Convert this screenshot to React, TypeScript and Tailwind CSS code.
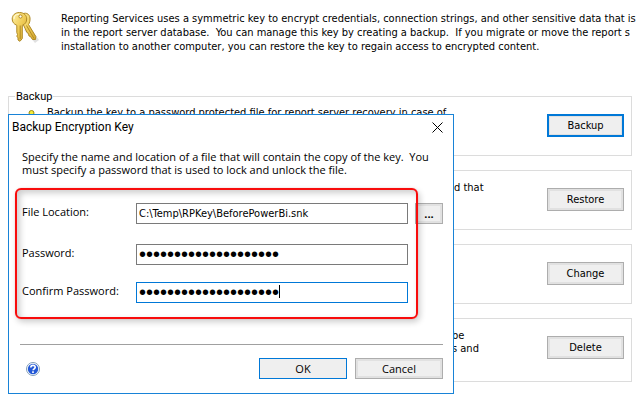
import { useState, type ReactNode } from "react";

const plainFrame = "border border-[#adadad] shadow-[inset_0_0_0_2px_#e1e1e1]";
const defaultFrame = "border-2 border-[#0078d7] shadow-[inset_0_0_0_1px_#e1e1e1]";
const fieldBase = "block h-[21px] w-full border bg-white pl-[2px] text-black outline-none";
const plainText = "font-['DejaVu_Sans_Condensed','DejaVu_Sans',sans-serif]";
const secretText = "font-['Liberation_Sans',sans-serif] text-[20px] leading-none";

function ActionButton({ label, primary }: { label: string; primary?: boolean }) {
  return (
    <button
      type="button"
      className={`h-[23px] w-[77px] shrink-0 bg-[#efefef] pb-px leading-none ${primary ? defaultFrame : plainFrame}`}
    >
      {label}
    </button>
  );
}

function KeysIcon() {
  return (
    <svg viewBox="0 0 30 34" className="h-[34px] w-[30px] shrink-0" aria-hidden="true">
      <defs>
        <linearGradient id="gold" x1="0" x2="1" y1="0" y2="1">
          <stop offset="0" stopColor="#fff2a8" />
          <stop offset="0.5" stopColor="#f0cd58" />
          <stop offset="1" stopColor="#d2a52c" />
        </linearGradient>
      </defs>
      <path d="M13 19 L18 15 L28 29 L24 32 Z" fill="#000" opacity="0.12" />
      <path
        d="M10 4 C14 0.5 18.5 2.5 19 7 C19.2 10 18.5 12 17.5 13.5 L24.8 25.5 L24.5 28.5 L21.5 28.5 L19.5 25.5 L18 25 L17.5 22.5 L16 21.5 L12 13 Z"
        fill="url(#gold)"
        stroke="#b08a26"
      />
      <path d="M15.5 14.5 L23 27.5" stroke="#b08a26" />
      <path
        d="M8.5 1.5 C13 1.5 15.7 4.3 15.7 8 C15.7 11 14.3 13.2 11.3 14.3 L11.3 27.5 L9 30.3 L7 29 L7 26.5 L5.8 25.5 L6.5 23.5 L5.8 21.5 L5.8 14.3 C3 13.2 1.2 11 1.2 8 C1.2 4.3 4 1.5 8.5 1.5 Z"
        fill="url(#gold)"
        stroke="#b08a26"
      />
      <path d="M9.2 14.5 V28" stroke="#b08a26" />
      <path d="M3 8 C3 5 5 3.2 8 3.2" stroke="#fffbe0" fill="none" />
      <circle cx="9.5" cy="5.5" r="1.6" fill="#fff" stroke="#b08a26" />
    </svg>
  );
}

function HelpIcon() {
  return (
    <svg viewBox="0 0 14 14" className="size-[14px]" aria-hidden="true">
      <circle cx="7" cy="7" r="6.5" fill="#fff" stroke="#7f9db9" />
      <circle cx="7" cy="7" r="5.2" fill="#2358d6" />
      <path
        d="M4.8 5.6 C4.8 2.6 9.4 2.8 9.2 5.4 C9.1 6.8 7.2 6.8 7.1 8.2 M7 9.3 V11"
        fill="none"
        stroke="#fff"
        strokeWidth="1.6"
      />
    </svg>
  );
}

function Group({ children, text, indent }: { children: ReactNode; text?: ReactNode; indent?: string }) {
  return (
    <section className="mb-[14px] flex items-start justify-between border border-[#dcdcdc] pt-[10px] pr-[7px] pb-[18px] last:pb-[22px]">
      <p className={`whitespace-pre leading-[13px] ${indent ?? ""}`}>{text}</p>
      <div className="flex pt-[7px]">{children}</div>
    </section>
  );
}

function BackupDialog() {
  const [file, setFile] = useState("C:\\Temp\\RPKey\\BeforePowerBi.snk");
  const [password, setPassword] = useState("x".repeat(20));
  const [confirm, setConfirm] = useState("x".repeat(20));

  return (
    <div
      role="dialog"
      aria-labelledby="dialog-title"
      className="absolute top-[114px] left-2 w-[446px] border border-[#1883d7] bg-white pb-[14px] font-['Open_Sans',sans-serif]"
    >
      <div className="flex h-[24px] items-center justify-between pr-[9px] pl-[3px]">
        <h1 id="dialog-title" className="font-['Roboto',sans-serif] text-[12px]">Backup Encryption Key</h1>
        <button type="button" aria-label="Close" className="p-px">
          <svg viewBox="0 0 11 11" className="size-[11px]" stroke="#000" aria-hidden="true">
            <path d="M0.5 0.5 L10.5 10.5 M10.5 0.5 L0.5 10.5" />
          </svg>
        </button>
      </div>

      <p className="mt-[11px] ml-[13px] whitespace-pre leading-[13px]">
        {"Specify the name and location of a file that will contain the copy of the key.  You\nmust specify a password that is used to lock and unlock the file."}
      </p>

      <div className="relative mt-[12px] pt-[15px] pr-[10px] pb-[16px] pl-[13px]">
        <div className="grid grid-cols-[114px_1fr_28px] items-center">
          <label htmlFor="file" className="pb-[2px]">File Location:</label>
          <div className="pr-[7px]">
            <input
              id="file"
              value={file}
              onChange={(e) => setFile(e.target.value)}
              className={`${fieldBase} ${plainText} border-[#7a7a7a]`}
            />
          </div>
          <button type="button" aria-label="Browse" className={`h-[21px] bg-[#efefef] font-bold leading-none ${plainFrame}`}>
            ...
          </button>

          <label htmlFor="password" className="mt-5 pb-[2px]">Password:</label>
          <div className="mt-5 pr-[7px]">
            <input
              id="password"
              type="password"
              value={password}
              onChange={(e) => setPassword(e.target.value)}
              className={`${fieldBase} ${secretText} border-[#7a7a7a]`}
            />
          </div>
          <span />

          <label htmlFor="confirm" className="mt-[17px] pb-[2px]">Confirm Password:</label>
          <div className="relative mt-[17px] pr-[7px]">
            <input
              id="confirm"
              type="password"
              value={confirm}
              onChange={(e) => setConfirm(e.target.value)}
              className={`${fieldBase} ${secretText} border-[#0078d7]`}
            />
            <span className="absolute top-[3px] left-[143px] h-[13px] w-px bg-black" />
          </div>
        </div>
        <div className="pointer-events-none absolute top-0 right-[35px] bottom-0 left-[6px] rounded-[6px] border-2 border-[#f80c0c] shadow-[0_0_1px_#ff000066,2px_3px_6px_#00000033,inset_3px_3px_6px_#00000033]" />
      </div>

      <hr className="mt-[25px] mr-[10px] ml-[11px] border-[#a0a0a0]" />

      <div className="mt-[13px] flex items-center gap-2 pr-[10px] pl-[17px]">
        <button type="button" aria-label="Help" className="mr-auto">
          <HelpIcon />
        </button>
        <button type="button" className="h-[21px] w-[88px] border border-[#0078d7] bg-[#efefef] pb-px leading-none">OK</button>
        <button type="button" className={`h-[21px] w-[88px] bg-[#efefef] pb-px leading-none ${plainFrame}`}>Cancel</button>
      </div>
    </div>
  );
}

export default function App() {
  return (
    <div className="relative min-h-screen overflow-hidden bg-white font-['DejaVu_Sans_Condensed','DejaVu_Sans',sans-serif] text-[11px] text-black">
      <header className="flex items-start gap-[20px] pt-[11px] pl-[11px]">
        <KeysIcon />
        <p className="mt-px whitespace-pre leading-[14px]">
          {"Reporting Services uses a symmetric key to encrypt credentials, connection strings, and other sensitive data that is\nin the report server database.  You can manage this key by creating a backup.  If you migrate or move the report s\ninstallation to another computer, you can restore the key to regain access to encrypted content."}
        </p>
      </header>

      <main className="mt-[36px] pr-[7px] pl-2">
        <fieldset className="mb-[14px] border border-[#dcdcdc] pr-[7px] pb-[18px]">
          <legend className="ml-[6px] px-px font-['Roboto',sans-serif] leading-[13px]">Backup</legend>
          <div className="flex items-start justify-between pt-[3px]">
            <div className="flex gap-[11px] pl-[18px]">
              <svg viewBox="0 0 9 9" className="mt-[3px] size-[9px]" aria-hidden="true">
                <circle cx="4.5" cy="4" r="2.5" fill="#f4ec3a" stroke="#9a8a10" />
              </svg>
              <p className="leading-[13px]">Backup the key to a password protected file for report server recovery in case of</p>
            </div>
            <div className="flex pt-[8px]">
              <ActionButton label="Backup" primary />
            </div>
          </div>
        </fieldset>

        <Group text="d that" indent="pl-[445px]">
          <ActionButton label="Restore" />
        </Group>
        <Group>
          <ActionButton label="Change" />
        </Group>
        <Group text={"be\ns and"} indent="pl-[443px]">
          <ActionButton label="Delete" />
        </Group>
      </main>

      <BackupDialog />
    </div>
  );
}
